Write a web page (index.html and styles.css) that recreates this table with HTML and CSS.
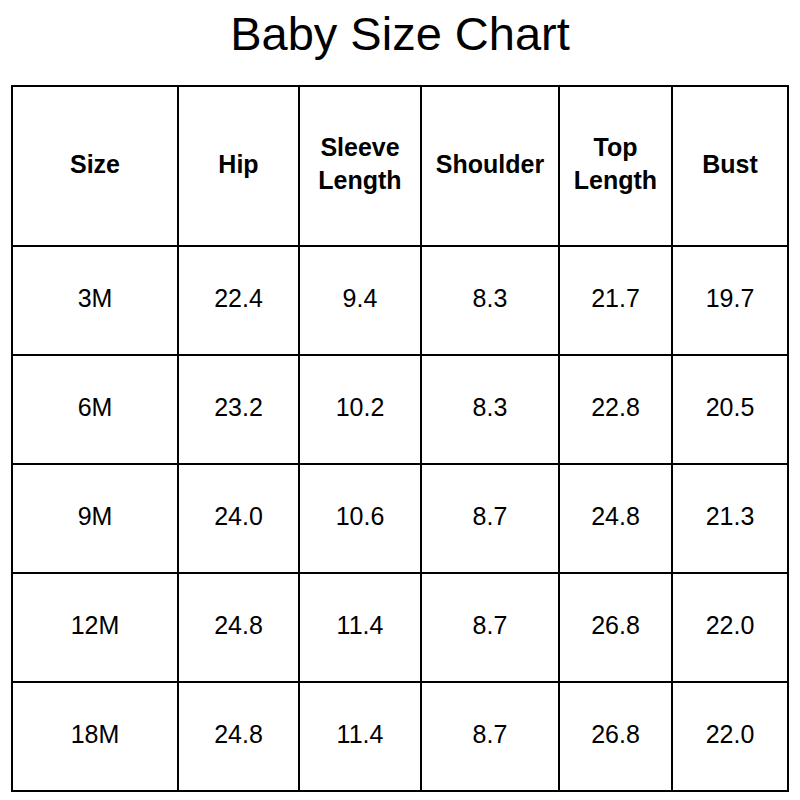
FILE: index.html
```html
<!DOCTYPE html>
<html>
<head>
<meta charset="utf-8">
<link rel="stylesheet" href="styles.css">
</head>
<body>
<h1 class="title">Baby Size Chart</h1>
<table class="chart">
  <colgroup>
    <col class="c1"><col class="c2"><col class="c3"><col class="c4"><col class="c5"><col class="c6">
  </colgroup>
  <thead>
    <tr class="head-row">
      <th>Size</th><th>Hip</th><th>Sleeve<br>Length</th><th>Shoulder</th><th>Top<br>Length</th><th>Bust</th>
    </tr>
  </thead>
  <tbody>
    <tr><td>3M</td><td>22.4</td><td>9.4</td><td>8.3</td><td>21.7</td><td>19.7</td></tr>
    <tr><td>6M</td><td>23.2</td><td>10.2</td><td>8.3</td><td>22.8</td><td>20.5</td></tr>
    <tr><td>9M</td><td>24.0</td><td>10.6</td><td>8.7</td><td>24.8</td><td>21.3</td></tr>
    <tr><td>12M</td><td>24.8</td><td>11.4</td><td>8.7</td><td>26.8</td><td>22.0</td></tr>
    <tr><td>18M</td><td>24.8</td><td>11.4</td><td>8.7</td><td>26.8</td><td>22.0</td></tr>
  </tbody>
</table>
</body>
</html>
```

FILE: styles.css
```css
html, body {
  margin: 0;
  padding: 0;
  background: #ffffff;
}
body {
  font-family: "Liberation Sans", Arial, sans-serif;
  color: #000000;
}
.title {
  margin: 0 0 21px 0;
  padding-top: 4px;
  font-size: 47px;
  font-weight: normal;
  line-height: 60px;
  text-align: center;
}
.chart {
  margin-left: 11px;
  width: 778px;
  border-collapse: collapse;
  table-layout: fixed;
}
.c1 { width: 166px; }
.c2 { width: 121px; }
.c3 { width: 122px; }
.c4 { width: 138px; }
.c5 { width: 113px; }
.c6 { width: 116px; }
.chart th, .chart td {
  border: 2px solid #000;
  text-align: center;
  vertical-align: middle;
  padding: 0 0 4px 0;
  font-size: 25px;
}
.chart th {
  font-weight: bold;
  line-height: 33px;
}
.head-row { height: 160px; }
.chart tbody tr { height: 109px; }
```
